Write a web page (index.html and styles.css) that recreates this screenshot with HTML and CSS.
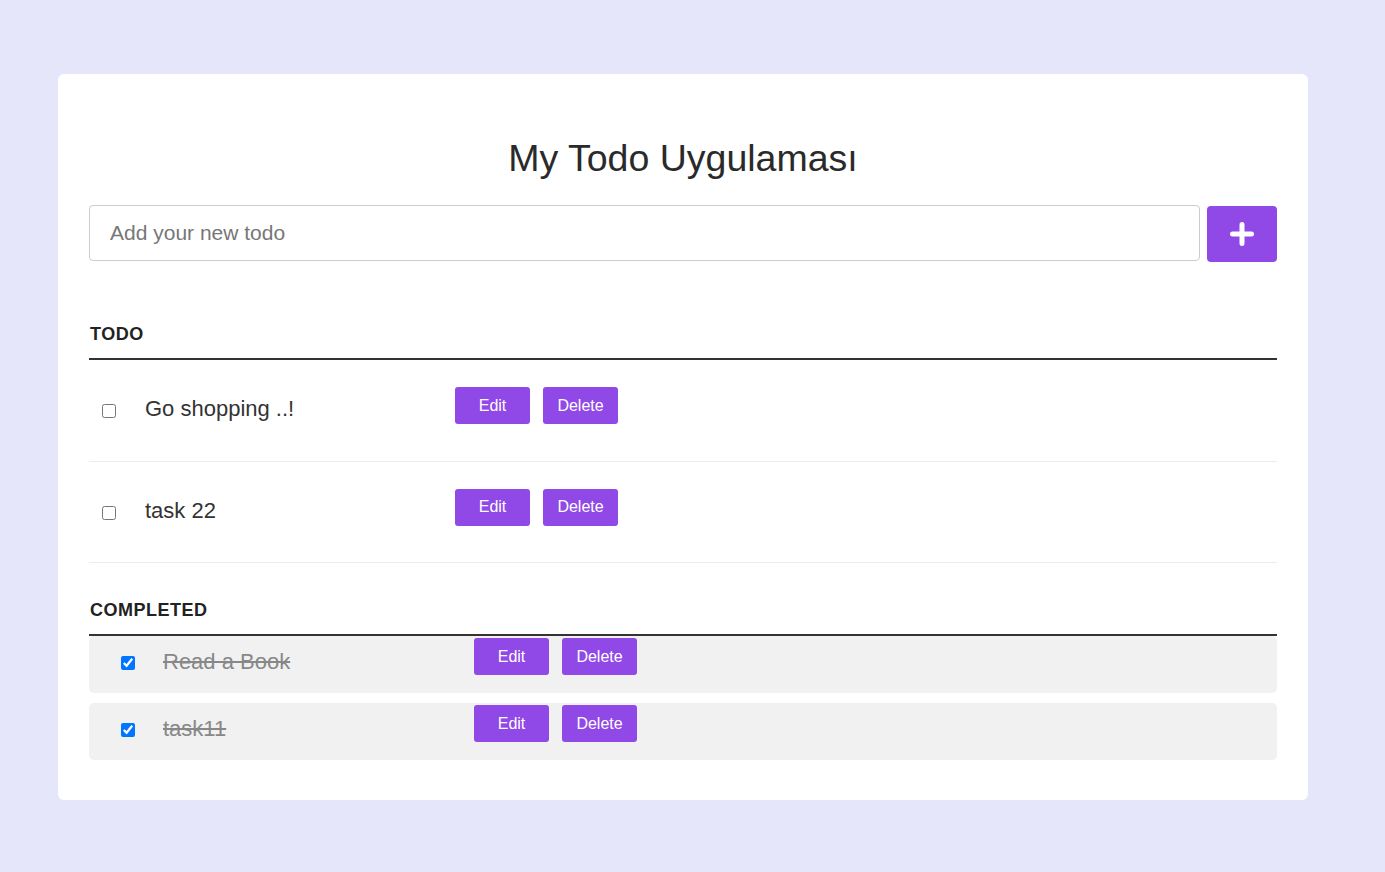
FILE: index.html
```html
<!DOCTYPE html>
<html lang="tr">
<head>
<meta charset="utf-8">
<title>My Todo Uygulaması</title>
<link rel="stylesheet" href="styles.css">
</head>
<body>
<main class="card">
  <h1 class="title">My Todo Uygulaması</h1>
  <form class="add-form">
    <input class="add-input" type="text" placeholder="Add your new todo">
    <button class="add-btn" type="button" aria-label="Add">
      <svg width="26" height="26" viewBox="0 0 26 26"><path d="M13 3.5v19M3.5 13h19" stroke="#fff" stroke-width="5" stroke-linecap="round" fill="none"/></svg>
    </button>
  </form>

  <h3 class="section-title section-todo">TODO</h3>
  <ul class="list">
    <li class="item">
      <input class="check" type="checkbox">
      <span class="text">Go shopping ..!</span>
      <button class="btn" type="button">Edit</button>
      <button class="btn" type="button">Delete</button>
    </li>
    <li class="item">
      <input class="check" type="checkbox">
      <span class="text">task 22</span>
      <button class="btn" type="button">Edit</button>
      <button class="btn" type="button">Delete</button>
    </li>
  </ul>

  <h3 class="section-title section-done">COMPLETED</h3>
  <ul class="list done-list">
    <li class="item done">
      <input class="check" type="checkbox" checked>
      <span class="text">Read a Book</span>
      <button class="btn" type="button">Edit</button>
      <button class="btn" type="button">Delete</button>
    </li>
    <li class="item done">
      <input class="check" type="checkbox" checked>
      <span class="text">task11</span>
      <button class="btn" type="button">Edit</button>
      <button class="btn" type="button">Delete</button>
    </li>
  </ul>
</main>
</body>
</html>
```
FILE: styles.css
```css
* { box-sizing: border-box; }

html, body {
  margin: 0;
  background: #e6e6fa;
  font-family: "Liberation Sans", Arial, sans-serif;
  color: #333;
}

body {
  padding: 74px 0 71px 58px;
}

.card {
  width: 1250px;
  background: #fff;
  border-radius: 6px;
  padding: 62px 31px 40px;
}

.title {
  margin: 0;
  text-align: center;
  font-size: 37.5px;
  line-height: 44px;
  font-weight: normal;
  color: #2a2a2a;
}

.add-form {
  display: flex;
  align-items: flex-start;
  gap: 7px;
  margin-top: 25px;
}

.add-input {
  flex: 1;
  height: 56px;
  border: 1px solid #ccc;
  border-radius: 4px;
  padding: 0 20px;
  font-family: inherit;
  font-size: 21px;
  color: #333;
  outline: none;
}

.add-input::placeholder { color: #777; }

.add-btn {
  width: 70px;
  height: 56px;
  margin-top: 1px;
  border: none;
  border-radius: 4px;
  background: #9048e6;
  display: flex;
  align-items: center;
  justify-content: center;
  padding: 0;
  cursor: pointer;
}

.add-btn svg { display: block; }

.section-title {
  margin: 0;
  font-size: 18px;
  line-height: 22px;
  font-weight: bold;
  letter-spacing: 0.5px;
  color: #222;
  padding: 0 1px 13px;
  border-bottom: 2px solid #333;
}

.section-todo { margin-top: 61px; }
.section-done { margin-top: 36px; }

.list {
  list-style: none;
  margin: 0;
  padding: 0;
}

.item {
  display: flex;
  align-items: flex-start;
  height: 101.5px;
  padding: 27px 14px 0 13px;
  border-bottom: 1px solid #ececec;
}

.check {
  width: 14px;
  height: 14px;
  margin: 17px 0 0;
  flex: none;
}

.text {
  width: 310px;
  margin: 9px 0 0 29px;
  font-size: 22px;
  line-height: 26px;
  color: #333;
}

.btn {
  width: 75px;
  height: 37px;
  margin-right: 13px;
  border: none;
  border-radius: 3px;
  background: #9048e6;
  color: #fff;
  font-family: inherit;
  font-size: 16px;
  padding: 0;
  cursor: pointer;
}

.done-list .item {
  height: 57px;
  padding: 2px 14px 0 32px;
  margin-top: 10px;
  border-bottom: none;
  border-radius: 5px;
  background: #f1f1f1;
}

.done-list .item:first-child { margin-top: 0; }

.done .check { margin-top: 18px; }

.done .text {
  width: 311px;
  margin: 11px 0 0 28px;
  color: #888;
  text-decoration: line-through;
}
```
